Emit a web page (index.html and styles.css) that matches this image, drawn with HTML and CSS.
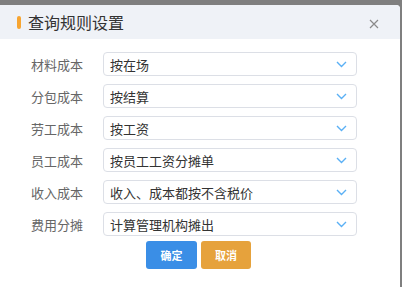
FILE: index.html
```html
<!DOCTYPE html>
<html lang="zh">
<head>
<meta charset="utf-8">
<link rel="stylesheet" href="styles.css">
</head>
<body>
<div class="dialog">
  <div class="header">
    <span class="bar"></span>
    <span class="title">查询规则设置</span>
    <svg class="close" width="10" height="10" viewBox="0 0 10 10"><path d="M1 1L9 9M9 1L1 9" stroke="#8a8a8a" stroke-width="1.2" fill="none"/></svg>
  </div>
  <div class="content">
    <div class="row"><span class="label">材料成本</span><div class="select"><span>按在场</span><svg class="chev" width="11" height="7" viewBox="0 0 11 7"><path d="M1 1L5.5 5.5L10 1" stroke="#5ab0f5" stroke-width="1.4" fill="none"/></svg></div></div>
    <div class="row"><span class="label">分包成本</span><div class="select"><span>按结算</span><svg class="chev" width="11" height="7" viewBox="0 0 11 7"><path d="M1 1L5.5 5.5L10 1" stroke="#5ab0f5" stroke-width="1.4" fill="none"/></svg></div></div>
    <div class="row"><span class="label">劳工成本</span><div class="select"><span>按工资</span><svg class="chev" width="11" height="7" viewBox="0 0 11 7"><path d="M1 1L5.5 5.5L10 1" stroke="#5ab0f5" stroke-width="1.4" fill="none"/></svg></div></div>
    <div class="row"><span class="label">员工成本</span><div class="select"><span>按员工工资分摊单</span><svg class="chev" width="11" height="7" viewBox="0 0 11 7"><path d="M1 1L5.5 5.5L10 1" stroke="#5ab0f5" stroke-width="1.4" fill="none"/></svg></div></div>
    <div class="row"><span class="label">收入成本</span><div class="select"><span>收入、成本都按不含税价</span><svg class="chev" width="11" height="7" viewBox="0 0 11 7"><path d="M1 1L5.5 5.5L10 1" stroke="#5ab0f5" stroke-width="1.4" fill="none"/></svg></div></div>
    <div class="row"><span class="label">费用分摊</span><div class="select"><span>计算管理机构摊出</span><svg class="chev" width="11" height="7" viewBox="0 0 11 7"><path d="M1 1L5.5 5.5L10 1" stroke="#5ab0f5" stroke-width="1.4" fill="none"/></svg></div></div>
    <div class="buttons">
      <button class="btn ok">确定</button>
      <button class="btn cancel">取消</button>
    </div>
  </div>
</div>
</body>
</html>
```
FILE: styles.css
```css
html, body {
  margin: 0;
  padding: 0;
}
body {
  background: #7f7f7f;
  width: 402px;
  height: 287px;
  overflow: hidden;
  font-family: "Noto Sans CJK SC", "Noto Sans", sans-serif;
}
.dialog {
  margin-top: 5px;
  width: 400px;
  height: 282px;
  background: #ffffff;
  border-radius: 0 4px 0 0;
}
.header {
  height: 34px;
  background: #eff2f7;
  border-radius: 0 4px 0 0;
  display: flex;
  align-items: center;
  padding-left: 17px;
  padding-right: 21px;
}
.bar {
  width: 4px;
  height: 13px;
  border-radius: 2px;
  background: #f7a531;
  margin-right: 7px;
}
.title {
  font-size: 16px;
  color: #333333;
  flex: 1;
  line-height: 20px;
}
.close {
  display: block;
  margin-top: 4px;
}
.content {
  padding-top: 13px;
  display: flex;
  flex-direction: column;
  gap: 8px;
}
.row {
  display: flex;
  align-items: center;
  height: 24px;
}
.label {
  width: 52px;
  margin-left: 31px;
  margin-right: 20px;
  font-size: 13px;
  color: #666666;
  line-height: 24px;
  padding-top: 2px;
}
.select {
  box-sizing: border-box;
  width: 254px;
  height: 24px;
  border: 1px solid #dcdfe6;
  border-radius: 4px;
  display: flex;
  align-items: center;
  padding-left: 6px;
  padding-right: 9px;
  font-size: 13px;
  color: #333333;
}
.select span {
  flex: 1;
}
.chev {
  display: block;
}
.buttons {
  display: flex;
  justify-content: center;
  gap: 4px;
  margin-top: -3px;
  padding-right: 3px;
}
.btn {
  width: 51px;
  height: 28px;
  border: none;
  border-radius: 3px;
  color: #ffffff;
  font-size: 11px;
  font-weight: bold;
  font-family: "Noto Sans CJK SC", sans-serif;
  padding: 0;
}
.ok {
  background: #3a8ee6;
}
.cancel {
  width: 50px;
  background: #e6a23c;
}
```
